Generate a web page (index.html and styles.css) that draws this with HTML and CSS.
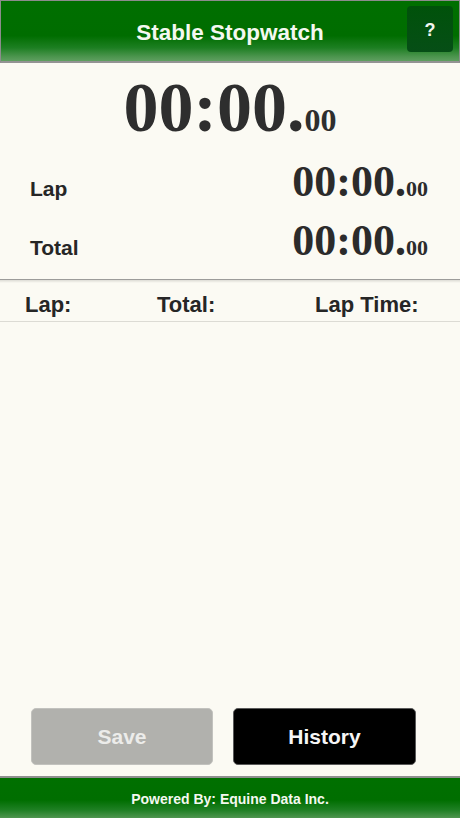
FILE: index.html
```html
<!DOCTYPE html>
<html>
<head>
<meta charset="utf-8">
<title>Stable Stopwatch</title>
<link rel="stylesheet" href="styles.css">
</head>
<body>
<div class="app">
  <header class="topbar">
    <div></div>
    <h1 class="title">Stable Stopwatch</h1>
    <button class="help">?</button>
  </header>

  <div class="main-time">00:00.<span class="hund">00</span></div>

  <div class="split-rows">
    <div class="split-row">
      <span class="split-label">Lap</span>
      <span class="split-time">00:00.<span class="hund-sm">00</span></span>
    </div>
    <div class="split-row">
      <span class="split-label">Total</span>
      <span class="split-time">00:00.<span class="hund-sm">00</span></span>
    </div>
  </div>

  <div class="table-head">
    <span>Lap:</span>
    <span>Total:</span>
    <span>Lap Time:</span>
  </div>

  <div class="lap-list"></div>

  <div class="actions">
    <button class="btn btn-save">Save</button>
    <button class="btn btn-history">History</button>
  </div>

  <footer class="footer">Powered By: Equine Data Inc.</footer>
</div>
</body>
</html>
```

FILE: styles.css
```css
* { box-sizing: border-box; }
html, body {
  margin: 0;
  padding: 0;
  background: #fbfaf3;
}
body {
  font-family: "Liberation Sans", Arial, sans-serif;
  color: #262626;
}
.app {
  width: 460px;
  height: 818px;
  display: flex;
  flex-direction: column;
  background: #fbfaf3;
}
.topbar {
  height: 63px;
  flex: none;
  border-top: 1px solid #8c8c8c;
  border-bottom: 2px solid #939393;
  border-left: 1px solid #8c8c8c;
  border-right: 1px solid #8c8c8c;
  background: linear-gradient(#006f00 0%, #006d00 58%, #1d7f22 78%, #4a944c 92%, #5f9f60 100%);
  display: grid;
  grid-template-columns: 1fr auto 1fr;
  align-items: start;
}
.title {
  margin: 0;
  padding-top: 4px;
  line-height: 55px;
  font-size: 22.5px;
  font-weight: bold;
  color: #f4f8f0;
}
.help {
  justify-self: end;
  margin: 5px 6px 0 0;
  width: 46px;
  height: 46px;
  border: none;
  border-radius: 4px;
  background: linear-gradient(#00520a, #064e16);
  color: #f2f6f0;
  font-family: "Liberation Sans", Arial, sans-serif;
  font-weight: bold;
  font-size: 18px;
  padding: 3px 0 0;
}
.main-time {
  flex: none;
  height: 80px;
  padding-top: 10px;
  text-align: center;
  font-family: "Liberation Serif", "Times New Roman", serif;
  font-weight: bold;
  font-size: 70px;
  line-height: 70px;
  color: #2e2e2e;
}
.hund {
  font-size: 32px;
  line-height: 32px;
}
.split-rows {
  flex: none;
  margin-top: 17px;
  display: flex;
  flex-direction: column;
}
.split-row {
  display: flex;
  justify-content: space-between;
  align-items: baseline;
  height: 59px;
  padding: 0 32px 0 30px;
}
.split-label {
  font-size: 21px;
  line-height: 21px;
  font-weight: bold;
  color: #262626;
}
.split-time {
  font-family: "Liberation Serif", "Times New Roman", serif;
  font-weight: bold;
  font-size: 44px;
  line-height: 44px;
  color: #2b2b2b;
}
.hund-sm {
  font-size: 22px;
  line-height: 22px;
}
.table-head {
  flex: none;
  margin-top: 1px;
  border-top: 1px solid #9c9c9a;
  border-bottom: 1px solid #dcdbd4;
  background: linear-gradient(rgba(0,0,0,0.12), rgba(0,0,0,0) 3px);
  height: 43px;
  padding: 7px 0 0 25px;
  display: grid;
  grid-template-columns: 132px 158px auto;
  font-size: 22px;
  font-weight: bold;
  line-height: 35px;
  color: #262626;
}
.lap-list {
  flex: 1;
}
.actions {
  flex: none;
  display: grid;
  grid-template-columns: 182px 183px;
  gap: 20px;
  padding-left: 31px;
  margin-bottom: 11px;
}
.btn {
  height: 57px;
  border-radius: 5px;
  font-family: "Liberation Sans", Arial, sans-serif;
  font-weight: bold;
  font-size: 21px;
  padding: 0;
}
.btn-save {
  background: #b1b1ad;
  border: 1px solid #c2c2be;
  color: #ececea;
}
.btn-history {
  background: #000;
  border: 1px solid #5a5a5a;
  color: #f6f6f6;
}
.footer {
  flex: none;
  height: 42px;
  border-top: 2px solid #8f8f8f;
  background: linear-gradient(#007000 0%, #006e00 55%, #1f8024 80%, #4f9650 100%);
  color: #f4f8f0;
  text-align: center;
  font-size: 14px;
  font-weight: bold;
  line-height: 40px;
  padding-top: 1px;
}
```
